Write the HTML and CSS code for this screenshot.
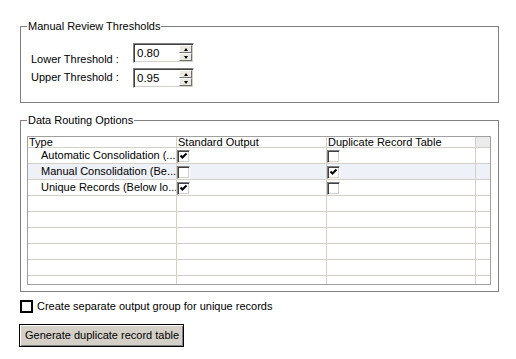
FILE: index.html
```html
<!DOCTYPE html>
<html>
<head>
<meta charset="utf-8">
<link rel="stylesheet" href="styles.css">
</head>
<body>
<div class="page">
  <fieldset class="group g1">
    <legend>Manual Review Thresholds</legend>
    <div class="thresholds">
      <div class="labels">
        <div class="lbl">Lower Threshold :</div>
        <div class="lbl second">Upper Threshold :</div>
      </div>
      <div class="spins">
        <div class="spin">
          <span class="val">0.80</span>
          <div class="arrows"><div class="abtn up"></div><div class="abtn down"></div></div>
        </div>
        <div class="spin second">
          <span class="val">0.95</span>
          <div class="arrows"><div class="abtn up"></div><div class="abtn down"></div></div>
        </div>
      </div>
    </div>
  </fieldset>

  <fieldset class="group g2">
    <legend>Data Routing Options</legend>
    <div class="grid">
      <div class="hd">Type</div><div class="hd">Standard Output</div><div class="hd">Duplicate Record Table</div><div class="hd corner"></div>

      <div class="c name">Automatic Consolidation (...</div>
      <div class="c"><div class="cb"><svg viewBox="0 0 9 9" width="9" height="9"><polyline points="1.5,3.5 3.5,5.5 7.5,1.5" fill="none" stroke="#000" stroke-width="2"/></svg></div></div>
      <div class="c"><div class="cb"></div></div>
      <div class="c"></div>

      <div class="c name hl">Manual Consolidation (Be...</div>
      <div class="c hl"><div class="cb"></div></div>
      <div class="c hl"><div class="cb"><svg viewBox="0 0 9 9" width="9" height="9"><polyline points="1.5,3.5 3.5,5.5 7.5,1.5" fill="none" stroke="#000" stroke-width="2"/></svg></div></div>
      <div class="c hl"></div>

      <div class="c name">Unique Records (Below lo...</div>
      <div class="c"><div class="cb"><svg viewBox="0 0 9 9" width="9" height="9"><polyline points="1.5,3.5 3.5,5.5 7.5,1.5" fill="none" stroke="#000" stroke-width="2"/></svg></div></div>
      <div class="c"><div class="cb"></div></div>
      <div class="c"></div>

      <div class="c"></div><div class="c"></div><div class="c"></div><div class="c"></div>
      <div class="c"></div><div class="c"></div><div class="c"></div><div class="c"></div>
      <div class="c"></div><div class="c"></div><div class="c"></div><div class="c"></div>
      <div class="c"></div><div class="c"></div><div class="c"></div><div class="c"></div>
      <div class="c"></div><div class="c"></div><div class="c"></div><div class="c"></div>
      <div class="c"></div><div class="c"></div><div class="c"></div><div class="c"></div>
    </div>
  </fieldset>

  <div class="opt"><span class="box"></span><span>Create separate output group for unique records</span></div>

  <button class="gen">Generate duplicate record table</button>
</div>
</body>
</html>
```

FILE: styles.css
```css
html, body {
  margin: 0;
  background: #fff;
}
body {
  font-family: "Liberation Sans", Arial, sans-serif;
  font-size: 11px;
  line-height: 13px;
  color: #000;
}
.page {
  padding: 20px 0 0 20px;
  width: 479px;
}
.group {
  box-sizing: border-box;
  margin: 0;
  padding: 0;
  min-width: 0;
  border: 1px solid #808080;
}
.group legend {
  margin-left: 6px;
  padding: 0 1px;
  line-height: 13px;
}
.g1 { height: 83px; }
.g2 { height: 178px; margin-top: 11px; }

.thresholds {
  display: flex;
  padding-left: 10px;
}
.labels {
  width: 102px;
  padding-top: 20px;
}
.lbl.second { margin-top: 5px; }
.spins { padding-top: 10px; }
.spin {
  box-sizing: border-box;
  width: 61px;
  height: 20px;
  display: flex;
  border: 1px solid;
  border-color: #808080 #fff #fff #808080;
  box-shadow: inset 1px 1px #404040, inset -1px -1px #d4d0c8;
  background: #fff;
}
.spin.second { margin-top: 5px; }
.val {
  flex: 1;
  padding: 3px 0 0 3px;
  font-size: 11.5px;
}
.arrows {
  width: 13px;
  margin: 1px 1px 1px 0;
  display: flex;
  flex-direction: column;
}
.abtn {
  box-sizing: border-box;
  flex: 1;
  background: #ece9e2;
  border: 1px solid;
  border-color: #fff #707070 #707070 #fff;
  display: flex;
  align-items: center;
  justify-content: center;
}
.abtn::after {
  content: "";
  width: 0;
  height: 0;
  border-left: 2.5px solid transparent;
  border-right: 2.5px solid transparent;
}
.up::after { border-bottom: 3px solid #000; }
.down::after { border-top: 3px solid #000; }

.grid {
  margin: 9px 0 0 6px;
  width: 462px;
  display: grid;
  grid-template-columns: 148px 149px 148px 14px;
  grid-template-rows: 10px repeat(8, 15px) 8px;
  gap: 1px;
  background: #d4d0c8;
  border: 1px solid #a0a0a0;
  overflow: hidden;
}
.hd {
  background: #fff;
  line-height: 10px;
  padding-left: 1px;
  white-space: nowrap;
  overflow: visible;
}
.hd.corner { background: #ebebeb; }
.c {
  background: #fff;
  line-height: 15px;
  white-space: nowrap;
  overflow: hidden;
}
.c.hl { background: #eef1f7; }
.c.name { padding-left: 13px; }
.cb {
  box-sizing: border-box;
  width: 13px;
  height: 13px;
  margin-top: 2px;
  border: 1px solid;
  border-color: #808080 #fff #fff #808080;
  box-shadow: inset 1px 1px #404040, inset -1px -1px #d4d0c8;
  background: #fff;
  padding: 1px 0 0 1px;
}
.cb svg { display: block; }

.opt {
  display: flex;
  align-items: center;
  height: 13px;
  margin-top: 8px;
}
.opt .box {
  box-sizing: border-box;
  width: 13px;
  height: 13px;
  border: 2px solid #000;
  margin-right: 4px;
}
.gen {
  display: block;
  box-sizing: border-box;
  margin: 11px 0 0 -1px;
  width: 165px;
  height: 23px;
  padding: 0 0 0 5px;
  text-align: left;
  font: inherit;
  color: #000;
  background: #d4d0c8;
  border: 1px solid #000;
  box-shadow: inset 1px 1px #fff, inset -1px -1px #808080;
  border-radius: 0;
}
```
